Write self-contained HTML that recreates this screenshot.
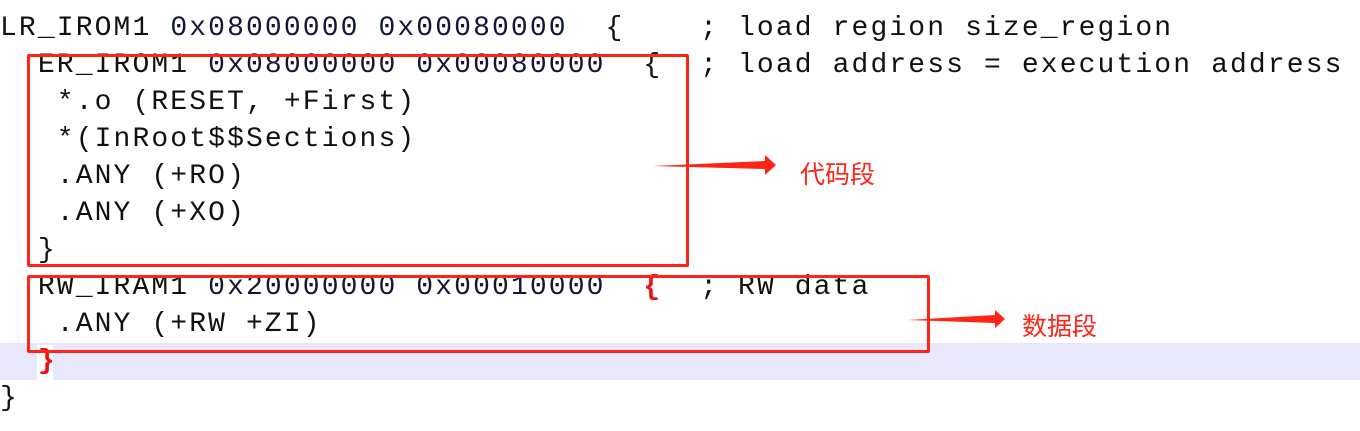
<!DOCTYPE html>
<html><head><meta charset="utf-8"><style>
body{margin:0;width:1360px;height:431px;background:#fff;position:relative;overflow:hidden}
.l{position:absolute;left:0;height:37px;line-height:37px;font-family:"Liberation Mono",monospace;font-size:28px;letter-spacing:2.12px;white-space:pre;color:#111}
.n{color:#101838}
.r{color:#e11;font-weight:bold}
.box{position:absolute;border:3px solid #ff2418;border-radius:2px}
.lab{position:absolute;color:#ff2418;font-family:"Noto Sans CJK SC",sans-serif;font-size:25px;line-height:30px}
</style></head><body>
<div style="position:absolute;left:0;top:343px;width:1360px;height:37px;background:#e8e8fa"></div>
<div style="position:absolute;left:37px;top:345px;width:16px;height:35px;background:#fff"></div>
<div class="l" style="top:10px">LR_IROM1 <span class="n">0x08000000 0x00080000</span>  {    ; load region size_region</div>
<div class="l" style="top:47px">  ER_IROM1 <span class="n">0x08000000 0x00080000</span>  {  ; load address = execution address</div>
<div class="l" style="top:84px">   *.o (RESET, +First)</div>
<div class="l" style="top:121px">   *(InRoot$$Sections)</div>
<div class="l" style="top:158px">   .ANY (+RO)</div>
<div class="l" style="top:195px">   .ANY (+XO)</div>
<div class="l" style="top:232px">  }</div>
<div class="l" style="top:269px">  RW_IRAM1 <span class="n">0x20000000 0x00010000</span>  <span class="r">{</span>  ; RW data</div>
<div class="l" style="top:306px">   .ANY (+RW +ZI)</div>
<div class="l" style="top:343px">  <span class="r">}</span></div>
<div class="l" style="top:380px">}</div>
<div class="box" style="left:27px;top:54px;width:656px;height:207px"></div>
<div class="box" style="left:27px;top:275px;width:897px;height:72px"></div>
<svg style="position:absolute;left:0;top:0" width="1360" height="431">
<polygon points="653,166 765,161 765,155 776,165 765,175 765,169" fill="#ff2418"/>
<polygon points="908,320 995,315 995,310 1005,319 995,328 995,323" fill="#ff2418"/>
</svg>
<div class="lab" style="left:800px;top:158px">代码段</div>
<div class="lab" style="left:1022px;top:310px">数据段</div>
</body></html>
